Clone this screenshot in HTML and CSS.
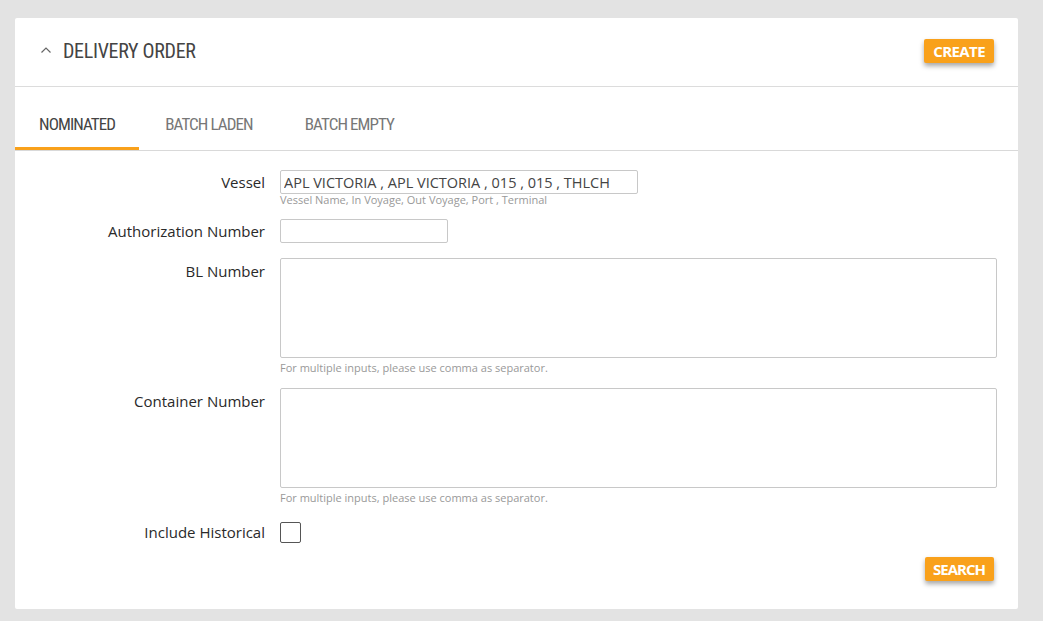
FILE: index.html
```html
<!DOCTYPE html>
<html>
<head>
<meta charset="utf-8">
<link rel="stylesheet" href="styles.css">
</head>
<body>
<div class="card">
  <div class="card-header">
    <div class="title">
      <svg class="caret" width="12" height="8" viewBox="0 0 12 8"><path d="M1.5 6.5 L6 2 L10.5 6.5" fill="none" stroke="#666" stroke-width="1.2"/></svg>
      <span class="title-text">DELIVERY ORDER</span>
    </div>
    <button class="btn btn-create">CREATE</button>
  </div>
  <div class="tabs">
    <div class="tab active"><span class="tab-text">NOMINATED</span></div>
    <div class="tab"><span class="tab-text">BATCH LADEN</span></div>
    <div class="tab"><span class="tab-text">BATCH EMPTY</span></div>
  </div>
  <form class="form">
    <div class="row">
      <label class="label lbl-mid">Vessel</label>
      <div class="field">
        <input class="input vessel" type="text" value="APL VICTORIA , APL VICTORIA , 015 , 015 , THLCH">
        <div class="hint">Vessel Name, In Voyage, Out Voyage, Port , Terminal</div>
      </div>
    </div>
    <div class="row row-auth">
      <label class="label lbl-mid">Authorization Number</label>
      <div class="field">
        <input class="input auth" type="text">
      </div>
    </div>
    <div class="row row-bl">
      <label class="label lbl-top">BL Number</label>
      <div class="field">
        <textarea class="area"></textarea>
        <div class="hint hint-area">For multiple inputs, please use comma as separator.</div>
      </div>
    </div>
    <div class="row row-cont">
      <label class="label lbl-top">Container Number</label>
      <div class="field">
        <textarea class="area"></textarea>
        <div class="hint hint-area">For multiple inputs, please use comma as separator.</div>
      </div>
    </div>
    <div class="row row-check">
      <label class="label lbl-mid">Include Historical</label>
      <div class="field">
        <span class="checkbox"></span>
      </div>
    </div>
    <div class="actions">
      <button type="button" class="btn">SEARCH</button>
    </div>
  </form>
</div>
</body>
</html>
```
FILE: styles.css
```css
html, body {
  margin: 0;
  padding: 0;
  background: #e3e3e3;
}
body {
  padding: 18px 25px 0 15px;
  font-family: "Open Sans", "Liberation Sans", sans-serif;
  color: #333;
}
.card {
  background: #fff;
  width: 1003px;
  height: 591px;
  border-radius: 2px;
  box-sizing: border-box;
}
.card-header {
  height: 69px;
  border-bottom: 1px solid #dcdcdc;
  display: flex;
  align-items: flex-start;
  justify-content: space-between;
  box-sizing: border-box;
  padding: 0 24px 0 25px;
}
.title {
  display: flex;
  align-items: center;
  margin-top: 21px;
  color: #444;
  font-family: "Roboto", sans-serif;
  font-size: 20px;
  height: 24px;
}
.title-text {
  display: inline-block;
  font-stretch: 75%;
  letter-spacing: -0.3px;
}
.caret {
  margin-right: 11px;
  margin-top: -2px;
}
.btn {
  background: #f9a11b;
  color: #fff;
  border: none;
  border-radius: 2px;
  font-family: "Open Sans", "Liberation Sans", sans-serif;
  font-weight: 700;
  font-size: 15px;
  letter-spacing: -1px;
  padding: 0 9px 0 8px;
  height: 24px;
  line-height: 24px;
  box-shadow: 0 3px 5px rgba(0,0,0,0.35);
}
.btn-create {
  letter-spacing: -0.6px;
  padding: 0 9px;
}
.card-header .btn {
  margin-top: 21px;
}
.tabs {
  display: flex;
  height: 64px;
  border-bottom: 1px solid #d9d9d9;
  box-sizing: border-box;
}
.tab {
  padding: 0 26px;
  height: 63px;
  line-height: 75px;
  box-sizing: border-box;
  font-family: "Roboto", sans-serif;
  font-size: 17px;
  color: #777;
}
.tab-text {
  font-stretch: 75%;
  letter-spacing: -0.9px;
}
.tab.active {
  color: #444;
  border-bottom: 3px solid #f9a11b;
  padding: 0 24px;
}
.form {
  padding: 19px 0 0 0;
  display: flex;
  flex-direction: column;
}
.row {
  display: flex;
  align-items: flex-start;
}
.label {
  width: 250px;
  text-align: right;
  font-size: 15px;
  color: #2a2a2a;
  box-sizing: border-box;
  margin-right: 15px;
}
.lbl-mid {
  line-height: 24px;
}
.lbl-top {
  line-height: 24px;
  margin-top: 1px;
}
.field {
  display: flex;
  flex-direction: column;
}
.input {
  height: 24px;
  box-sizing: border-box;
  border: 1px solid #c8c8c8;
  border-radius: 2px;
  font-family: "Open Sans", "Liberation Sans", sans-serif;
  font-size: 14.5px;
  color: #444;
  padding: 0 3px;
  outline: none;
}
.vessel {
  width: 358px;
}
.auth {
  width: 168px;
}
.hint {
  font-size: 11px;
  color: #999;
  line-height: 12px;
  margin-top: 0px;
}
.row-auth {
  margin-top: 13px;
}
.row-bl {
  margin-top: 15px;
}
.area {
  width: 717px;
  height: 100px;
  box-sizing: border-box;
  border: 1px solid #c8c8c8;
  border-radius: 2px;
  resize: none;
  display: block;
  margin: 0;
  outline: none;
}
.hint-area {
  margin-top: 4px;
}
.row-cont {
  margin-top: 14px;
}
.row-check {
  margin-top: 16px;
}
.checkbox {
  width: 21px;
  height: 21px;
  box-sizing: border-box;
  border: 1px solid #555;
  border-radius: 2px;
  display: block;
  margin-top: 2px;
}
.actions {
  display: flex;
  justify-content: flex-end;
  padding-right: 24px;
  margin-top: 13px;
}
```
